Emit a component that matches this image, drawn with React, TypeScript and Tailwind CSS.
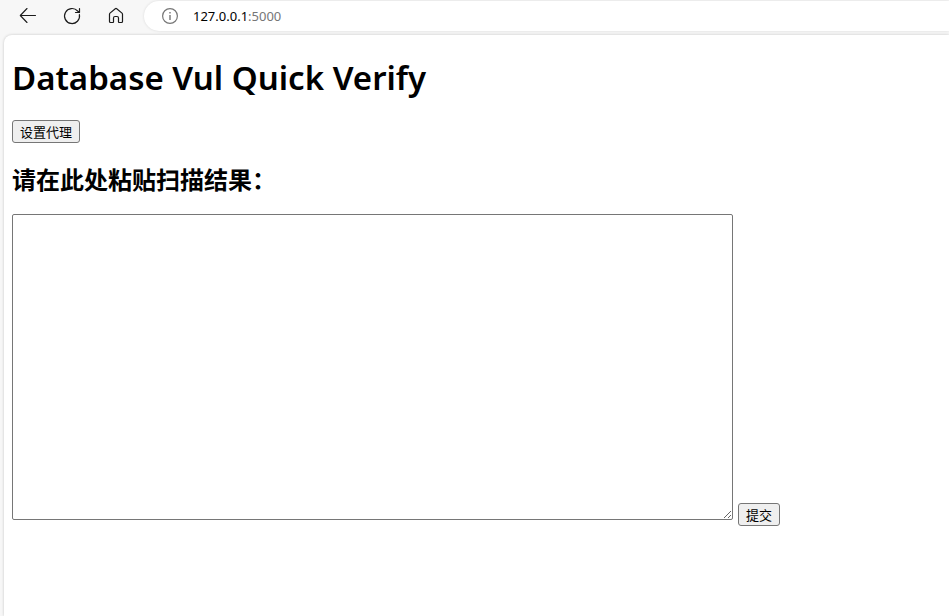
import React from "react";

function BackIcon() {
  return (
    <svg width="20" height="20" viewBox="0 0 20 20" fill="none" stroke="#1b1b1b" strokeWidth="1.1" strokeLinecap="round" strokeLinejoin="round">
      <path d="M2.5 9.5H17.5M9 2.5L2.3 9.5L9 16.5" />
    </svg>
  );
}

function ReloadIcon() {
  return (
    <svg width="20" height="20" viewBox="0 0 20 20" fill="none" stroke="#1b1b1b" strokeWidth="1.2" strokeLinecap="round" strokeLinejoin="round">
      <path d="M17.4 8.6A7.5 7.5 0 1 1 15.6 5L17.5 6.5M17.5 2.5V6.5H13.5" />
    </svg>
  );
}

function HomeIcon() {
  return (
    <svg width="20" height="20" viewBox="0 0 20 20" fill="none" stroke="#1b1b1b" strokeWidth="1.2" strokeLinejoin="round">
      <path d="M3.5 8.3Q3.5 7.6 4 7.1L9.3 2.7Q10 2.2 10.7 2.7L16 7.1Q16.5 7.6 16.5 8.3V15.5Q16.5 16.5 15.5 16.5H13Q12.5 16.5 12.5 16V12Q12.5 10.5 11 10.5H9Q7.5 10.5 7.5 12V16Q7.5 16.5 7 16.5H4.5Q3.5 16.5 3.5 15.5Z" />
    </svg>
  );
}

function InfoIcon() {
  return (
    <svg width="18" height="18" viewBox="0 0 18 18" fill="none" stroke="#767676" strokeWidth="1.2">
      <circle cx="9" cy="9" r="7.4" />
      <path d="M9 8V13M9 5V6.5" strokeWidth="1.4" />
    </svg>
  );
}

function Toolbar() {
  return (
    <header className="flex h-[35px] items-start bg-[#f7f7f7] pt-px">
      <nav className="flex h-[30px] items-center gap-6 pl-[18px]">
        <button type="button" aria-label="Back"><BackIcon /></button>
        <button type="button" aria-label="Reload"><ReloadIcon /></button>
        <button type="button" aria-label="Home"><HomeIcon /></button>
      </nav>
      <div className="ml-[18px] flex h-[30px] flex-1 items-center gap-3.5 rounded-l-full bg-white pl-[17px] shadow-[0_0_3px_rgba(0,0,0,0.12)]">
        <InfoIcon />
        <span className="text-[13px] leading-5 text-[#767676]">
          <span className="text-black">127.0.0.1</span>:5000
        </span>
      </div>
    </header>
  );
}

const buttonStyle =
  "h-[23px] rounded-[3px] border border-[#767676] bg-[#efefef] px-[7px] text-[13px] leading-5 text-black hover:bg-[#e5e5e5]";

export default function App() {
  return (
    <div className="flex min-h-screen flex-col bg-[#f7f7f7] font-['Noto_Sans','Noto_Sans_CJK_SC',sans-serif] text-black">
      <Toolbar />
      <main className="ml-1 flex-1 rounded-tl-lg bg-white px-2 pt-5 shadow-[0_0_3px_rgba(0,0,0,0.2)]">
        <h1 className="text-[33px] leading-[46px] font-semibold">Database Vul Quick Verify</h1>
        <div className="mt-[19px] flex">
          <button type="button" className={buttonStyle}>设置代理</button>
        </div>
        <form onSubmit={(event) => event.preventDefault()}>
          <h2 className="mt-5 text-2xl leading-[34px] font-bold">
            <label htmlFor="scan-result">请在此处粘贴扫描结果：</label>
          </h2>
          <div className="mt-[17px] flex items-end gap-[5px]">
            <textarea
              id="scan-result"
              className="mb-1.5 h-[306px] w-[721px] max-w-full resize rounded-[2px] border border-[#767676] bg-white p-0.5 font-mono text-[13px]"
            />
            <button type="submit" className={buttonStyle}>提交</button>
          </div>
        </form>
      </main>
    </div>
  );
}
